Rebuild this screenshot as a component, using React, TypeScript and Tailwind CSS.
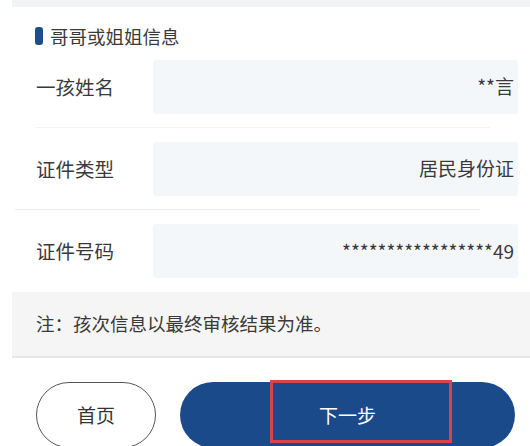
import React from "react";

const rows = [
  { label: "一孩姓名", value: "**言" },
  { label: "证件类型", value: "居民身份证" },
  { label: "证件号码", value: "*****************49" },
];

export default function App() {
  return (
    <div
      className="relative h-[446px] w-[530px] overflow-hidden bg-white text-[#3a3a3a]"
      style={{ fontFamily: '"Noto Sans CJK SC", "Noto Sans", sans-serif' }}
    >
      {/* top strip */}
      <div className="ml-[12px] h-[7px] bg-[#f2f3f5]" />

      {/* section title */}
      <div className="flex h-[39px] items-start pt-[20px] pl-[35px]">
        <div className="flex items-center gap-[7px]">
          <span className="h-[18px] w-[8px] rounded-[3px] bg-[#1d4d8a]" />
          <span className="text-[18.5px] leading-[18px]">哥哥或姐姐信息</span>
        </div>
      </div>

      {/* form rows */}
      {rows.map((row, i) => (
        <div key={row.label} className="flex h-[82px] flex-col">
          <div className="flex flex-1 items-center">
            <span className="w-[153px] pl-[36px] text-[19.5px]">{row.label}</span>
            <div className="mr-[12px] flex h-[54px] flex-1 items-center justify-end rounded-[3px] bg-[#f4f7f9] pr-[4px] text-[19px]">
              {row.value}
            </div>
          </div>
          {i < rows.length - 1 && (
            <div
              className={
                i === 0
                  ? "ml-[35px] mr-[40px] h-px bg-[#f3f3f3]"
                  : "ml-[15px] mr-[50px] h-px bg-[#ececec]"
              }
            />
          )}
        </div>
      ))}

      {/* notice */}
      <div className="ml-[12px] flex h-[66px] items-center border-b-2 border-[#e6e6e6] bg-[#f5f5f5] pl-[24px] text-[18.5px]">
        注：孩次信息以最终审核结果为准。
      </div>

      {/* buttons */}
      <div className="flex gap-[24px] pt-[24px] pl-[36px] pr-[15px]">
        <button className="flex h-[66px] w-[120px] items-center justify-center rounded-full border-[1.5px] border-[#555] text-[19px] text-[#333]">
          首页
        </button>
        <button className="relative flex h-[66px] flex-1 items-center justify-center rounded-full bg-[#1b4a8a] text-[19px] text-white">
          下一步
          <span className="absolute top-[-2px] left-[90px] h-[63px] w-[182px] border-[3px] border-[#d8424b]" />
        </button>
      </div>
    </div>
  );
}
